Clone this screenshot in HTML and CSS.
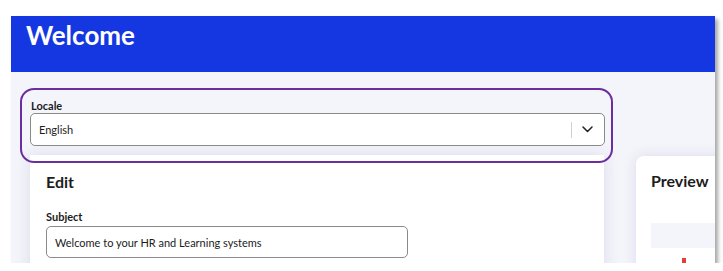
FILE: index.html
```html
<!DOCTYPE html>
<html lang="en">
<head>
    <meta charset="UTF-8">
    <title>Welcome</title>
    <link rel="stylesheet" href="styles.css">
</head>
<body>
    <div class="frame">
        <header class="top-bar">
            <h1>Welcome</h1>
        </header>

        <div class="page">
            <!-- Locale picker, highlighted -->
            <div class="locale-box">
                <label class="field-label" for="locale">Locale</label>
                <div class="select" id="locale">
                    <span class="select-value">English</span>
                    <span class="select-sep"></span>
                    <svg class="chevron" width="11" height="7" viewBox="0 0 11 7">
                        <path d="M1 1 L5.5 5.5 L10 1" fill="none" stroke="#222" stroke-width="1.5" stroke-linecap="round" stroke-linejoin="round"/>
                    </svg>
                </div>
            </div>

            <div class="cards">
                <div class="card edit-card">
                    <h2>Edit</h2>
                    <div class="field-label">Subject</div>
                    <div class="text-input">Welcome to your HR and Learning systems</div>
                </div>

                <div class="card preview-card">
                    <h2>Preview</h2>
                    <div class="preview-bar"></div>
                    <div class="preview-mark"></div>
                </div>
            </div>
        </div>
    </div>
</body>
</html>
```

FILE: styles.css
```css
body {
    margin: 0;
    background-color: #ffffff;
    font-family: Lato, "Noto Sans", sans-serif;
    color: #1c1c1c;
}

.frame {
    margin: 16px 0 0 11px;
    width: 704px;
    height: 247px;
    background-color: #f4f5fa;
    overflow: hidden;
    box-shadow: 3px 3px 4px rgba(0, 0, 0, 0.35);
}

.top-bar {
    box-sizing: border-box;
    height: 56px;
    background-color: #1537e2;
    color: white;
    padding: 3px 15px 0 15px;
}

.top-bar h1 {
    margin: 0;
    font-size: 26px;
    font-weight: 700;
}

.page {
    padding: 16px 0 0 9px;
}

.locale-box {
    position: relative;
    z-index: 2;
    box-sizing: border-box;
    width: 593px;
    height: 75px;
    border: 2px solid #6a2ea0;
    border-radius: 14px;
    padding: 0 6px 0 8px;
}

.field-label {
    display: block;
    font-size: 11px;
    font-weight: 700;
    color: #1c1c1c;
}

.locale-box .field-label {
    margin: 9px 0 1px 1px;
}

.select {
    box-sizing: border-box;
    height: 33px;
    border: 1px solid #8a8a8a;
    border-radius: 5px;
    background-color: white;
    display: flex;
    align-items: center;
    padding-left: 8px;
}

.select-value {
    flex: 1;
    font-size: 11px;
}

.select-sep {
    width: 1px;
    height: 16px;
    background-color: #d0d0d0;
}

.chevron {
    margin: 0 11px 0 10px;
}

.cards {
    display: flex;
    gap: 32px;
    margin-top: -8px;
    padding-left: 10px;
}

.card {
    flex-shrink: 0;
    box-sizing: border-box;
    background-color: white;
    border-radius: 8px;
    box-shadow: 0 0 14px rgba(50, 50, 130, 0.13);
    height: 140px;
}

.card h2 {
    margin: 0;
    font-size: 16px;
    font-weight: 700;
}

.edit-card {
    width: 574px;
    padding: 17px 16px;
    border-radius: 0;
}

.edit-card .field-label {
    margin: 19px 0 3px 0;
}

.text-input {
    box-sizing: border-box;
    width: 362px;
    height: 32px;
    border: 1px solid #8a8a8a;
    border-radius: 5px;
    font-size: 11px;
    display: flex;
    align-items: center;
    padding-left: 8px;
}

.preview-card {
    width: 200px;
    margin-top: 1px;
    padding: 15px 15px;
    position: relative;
}

.preview-bar {
    margin-top: 33px;
    height: 25px;
    background-color: #f4f5fa;
}

.preview-mark {
    position: absolute;
    left: 46px;
    top: 102px;
    width: 4px;
    height: 10px;
    background-color: #e83a3a;
}
```
